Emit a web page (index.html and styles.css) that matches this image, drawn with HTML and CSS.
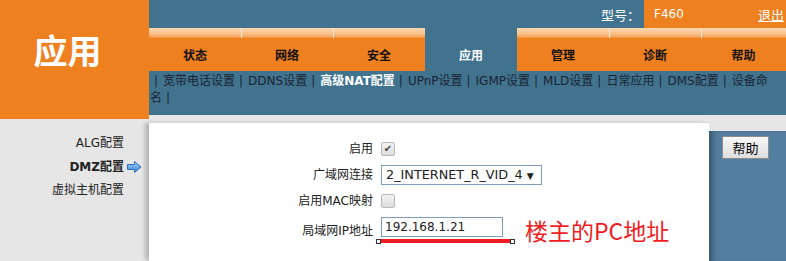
FILE: index.html
```html
<!DOCTYPE html>
<html lang="zh-CN">
<head>
    <meta charset="UTF-8">
    <title>应用 - DMZ配置</title>
    <link rel="stylesheet" href="styles.css">
</head>
<body>

<div class="header">
    <div class="logo">应用</div>
    <div class="head-right">
        <div class="topbar">
            <span class="model-label">型号：</span>
            <div class="model-box">
                <span class="model">F460</span>
                <a class="logout" href="#">退出</a>
            </div>
        </div>
        <div class="tabs">
            <div class="tab">状态</div>
            <div class="tab">网络</div>
            <div class="tab">安全</div>
            <div class="tab active">应用</div>
            <div class="tab">管理</div>
            <div class="tab">诊断</div>
            <div class="tab">帮助</div>
        </div>
        <div class="submenu"><span class="sep">|</span>宽带电话设置<span class="sep">|</span>DDNS设置<span class="sep">|</span><span class="current">高级NAT配置</span><span class="sep">|</span>UPnP设置<span class="sep">|</span>IGMP设置<span class="sep">|</span>MLD设置<span class="sep">|</span>日常应用<span class="sep">|</span>DMS配置<span class="sep">|</span>设备命<wbr>名<span class="sep">|</span></div>
    </div>
</div>

<div class="main">
    <div class="sidebar">
        <div class="side-item">ALG配置</div>
        <div class="side-item selected">DMZ配置
            <svg class="arrow" width="15" height="12" viewBox="0 0 15 12">
                <defs>
                    <linearGradient id="ag" x1="0" y1="0" x2="0" y2="1">
                        <stop offset="0" stop-color="#a8d6f7"/>
                        <stop offset="1" stop-color="#2f7fd0"/>
                    </linearGradient>
                </defs>
                <path d="M0.5 3.5 H7.5 V0.5 L14 6 L7.5 11.5 V8.5 H0.5 Z" fill="url(#ag)" stroke="#2a6cb5" stroke-width="1"/>
            </svg>
        </div>
        <div class="side-item">虚拟主机配置</div>
    </div>

    <div class="content">
        <div class="form">
            <label>启用</label>
            <div><span class="check">&#10004;</span></div>

            <label>广域网连接</label>
            <div><span class="select">2_INTERNET_R_VID_4 <span class="caret">&#9660;</span></span></div>

            <label>启用MAC映射</label>
            <div><span class="check"></span></div>

            <label>局域网IP地址</label>
            <div class="ip-row">
                <div class="ip-wrap">
                    <span class="ip-input">192.168.1.21</span>
                    <span class="redline"><i class="dot"></i><i class="dot"></i></span>
                </div>
                <span class="note">楼主的PC地址</span>
            </div>
        </div>
    </div>

    <div class="help-panel">
        <button class="help-btn">帮助</button>
    </div>
</div>

</body>
</html>
```

FILE: styles.css
```css
body {
    margin: 0;
    width: 786px;
    height: 261px;
    overflow: hidden;
    background: #e6e6e6;
    font-family: "DejaVu Sans", "Noto Sans CJK SC", sans-serif;
    font-size: 12px;
    color: #222;
}
.header {
    display: flex;
    align-items: flex-start;
}
.logo {
    width: 149px;
    height: 119px;
    background: #ef801f;
    color: #fff;
    font-family: "Noto Sans CJK SC", sans-serif;
    font-size: 34px;
    font-weight: bold;
    display: flex;
    justify-content: center;
    align-items: center;
    padding: 0 14px 20px 0;
    box-sizing: border-box;
}
.head-right {
    flex: 1;
    min-width: 0;
}
.topbar {
    height: 28px;
    background: #41738f;
    display: flex;
    justify-content: flex-end;
    align-items: center;
}
.model-label {
    color: #fff;
    font-size: 13px;
    margin-right: 4px;
}
.model-box {
    width: 142px;
    height: 28px;
    background: #ef801f;
    display: flex;
    justify-content: space-between;
    align-items: center;
    padding: 0 2px 0 10px;
    box-sizing: border-box;
}
.model {
    color: #fff;
    font-size: 12px;
}
.logout {
    color: #fff;
    font-size: 13px;
}
.tabs {
    display: flex;
    height: 43px;
    background: #41738f;
}
.tab {
    width: 92px;
    height: 43px;
    box-sizing: border-box;
    background:
        linear-gradient(#fde6cf, #fde6cf) left top / 1px 10px no-repeat,
        linear-gradient(to bottom, #fcd9b4 0, #fbc796 4px, #f6a860 9px, #ef801f 10px, #ef801f 100%);
    display: flex;
    justify-content: center;
    align-items: center;
    padding-top: 9px;
    font-weight: bold;
    color: #111;
}
.tab:first-child,
.tab.active + .tab {
    background: linear-gradient(to bottom, #fcd9b4 0, #fbc796 4px, #f6a860 9px, #ef801f 10px, #ef801f 100%);
}
.tab.active {
    background: #41738f;
    color: #fff;
}
.tab:last-child {
    width: 85px;
}
.submenu {
    height: 44px;
    background: #41738f;
    color: #1b2330;
    font-size: 12px;
    line-height: 17px;
    padding: 2px 2px 0 1px;
    box-sizing: border-box;
    word-break: break-all;
}
.submenu .sep {
    margin: 0 5px 0 4px;
}
.submenu .current {
    color: #fff;
    font-weight: bold;
}
.main {
    display: flex;
    align-items: flex-start;
    height: 142px;
}
.sidebar {
    width: 149px;
    padding-top: 13px;
    padding-right: 25px;
    box-sizing: border-box;
    text-align: right;
    flex-shrink: 0;
}
.side-item {
    height: 23.5px;
    line-height: 23px;
    position: relative;
}
.side-item.selected {
    font-weight: bold;
}
.arrow {
    position: absolute;
    right: -18px;
    top: 5px;
}
.content {
    flex: 1;
    align-self: stretch;
    margin-top: 3px;
    background: #fff;
    border-top: 1px solid #d6d6d6;
    box-shadow: -5px 0 4px -1px rgba(0, 0, 0, 0.22);
    padding-top: 16px;
}
.form {
    display: grid;
    grid-template-columns: 224px auto;
    column-gap: 8px;
    row-gap: 6px;
    align-items: center;
}
.form label {
    text-align: right;
    height: 20px;
    line-height: 20px;
}
.check {
    display: inline-block;
    width: 12px;
    height: 12px;
    border: 1px solid #b8b8b8;
    border-radius: 2px;
    background: linear-gradient(#f4f4f4, #dcdcdc);
    vertical-align: middle;
    font-size: 10px;
    line-height: 12px;
    text-align: center;
    color: #444;
}
.select {
    display: inline-block;
    width: 155px;
    height: 18px;
    border: 1px solid #7f9db9;
    font-size: 12.8px;
    line-height: 18px;
    padding-left: 4px;
    white-space: nowrap;
}
.caret {
    font-size: 9px;
}
.ip-row {
    display: flex;
    align-items: flex-start;
}
.ip-wrap {
    position: relative;
}
.ip-input {
    display: block;
    width: 117px;
    height: 18px;
    border: 1px solid #7f9db9;
    font-size: 12px;
    line-height: 18px;
    padding-left: 3px;
}
.redline {
    display: block;
    height: 4px;
    margin: 2px 0 0 -4px;
    width: 137px;
    background: #ef1c24;
    position: relative;
}
.dot {
    position: absolute;
    top: 0;
    width: 3px;
    height: 3px;
    background: #fff;
    border: 1px solid #333;
}
.dot:first-child {
    left: -1px;
}
.dot:last-child {
    right: -1px;
}
.note {
    color: #ef1c24;
    font-family: "Noto Sans CJK SC", sans-serif;
    font-size: 23px;
    line-height: 28px;
    margin-left: 11px;
    margin-top: -1px;
}
.help-panel {
    width: 77px;
    height: 131px;
    margin-top: 12px;
    background: #527ea0;
    box-shadow: inset 6px 0 6px -3px rgba(0, 0, 0, 0.35);
    padding: 5px 0 0 13px;
    box-sizing: border-box;
    flex-shrink: 0;
}
.help-btn {
    width: 47px;
    height: 23px;
    border: 1px solid #8c8c8c;
    background: linear-gradient(#f7f7f7, #dedede);
    font-family: "Noto Sans CJK SC", sans-serif;
    font-size: 13px;
    padding: 0;
}
```
